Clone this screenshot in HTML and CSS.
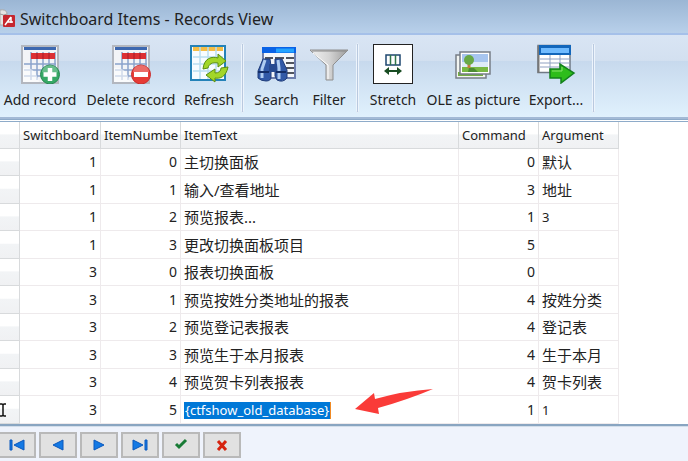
FILE: index.html
```html
<!DOCTYPE html>
<html lang="zh-CN">
<head>
  <meta charset="UTF-8" />
  <title>Switchboard Items - Records View</title>
  <link rel="stylesheet" href="styles.css">
</head>
<body>

<header class="titlebar">
  <svg class="app-icon" width="16" height="22" viewBox="0 0 16 22">
    <path d="M0 2Q6 1 7 5V17H0Z" fill="#e4e4e4" stroke="#aaa"/>
    <path d="M0 6q4 2 7 0" fill="none" stroke="#999"/>
    <rect x="3" y="7" width="12" height="12" rx="1" fill="#c6262e"/>
    <path d="M5 17 11 9M11 9v6M7 14h6" fill="none" stroke="#fff" stroke-width="1.5"/>
  </svg>
  <h1>Switchboard Items - Records View</h1>
</header>

<div class="toolbar">
  <button class="tool">
    <svg width="40" height="40" viewBox="0 0 40 40">
      <rect x="2" y="2" width="36" height="37" fill="#f3f4f7" stroke="#b3b7bf" stroke-width="2"/>
      <path d="M4 4.500H36" stroke="#3d68b0" stroke-width="3"/>
      <path d="M11 8V36M17 8V36M23 8V36M29 8V36M35 8V36M4 20H36M4 26H36M4 32H36" stroke="#8ba2cc" stroke-width="1.500"/>
      <rect x="11" y="9" width="24" height="6" fill="#dc2f34"/>
      <path d="M17 9v6M23 9v6M29 9v6" stroke="#a81d29"/>
      <path d="M3 24q12-2 16 14H3z" fill="#fff" opacity=".6"/>
      <circle cx="30" cy="30.500" r="9.500" fill="#36a865" stroke="#278850"/>
      <path d="M22 28a8 7 0 0 1 16 0q-8 4-16 0" fill="#fff" opacity=".25"/>
      <path d="M30 24v13M23.500 30.500h13" stroke="#fff" stroke-width="4.500"/>
    </svg>
    <span>Add record</span>
  </button>
  <button class="tool">
    <svg width="40" height="40" viewBox="0 0 40 40">
      <rect x="2" y="2" width="36" height="37" fill="#f3f4f7" stroke="#b3b7bf" stroke-width="2"/>
      <path d="M4 4.500H36" stroke="#3d68b0" stroke-width="3"/>
      <path d="M11 8V36M17 8V36M23 8V36M29 8V36M35 8V36M4 20H36M4 26H36M4 32H36" stroke="#8ba2cc" stroke-width="1.500"/>
      <rect x="11" y="9" width="24" height="6" fill="#dc2f34"/>
      <path d="M17 9v6M23 9v6M29 9v6" stroke="#a81d29"/>
      <path d="M3 24q12-2 16 14H3z" fill="#fff" opacity=".6"/>
      <circle cx="30" cy="30.500" r="9.500" fill="#e63b35" stroke="#c92b2b"/>
      <path d="M22 28a8 7 0 0 1 16 0q-8 4-16 0" fill="#fff" opacity=".25"/>
      <path d="M23 30.500h14" stroke="#fff" stroke-width="5"/>
    </svg>
    <span>Delete record</span>
  </button>
  <button class="tool">
    <svg width="40" height="40" viewBox="0 0 40 40">
      <rect x="2" y="2" width="34" height="34" fill="#f7fcff" stroke="#2482b8" stroke-width="2"/>
      <rect x="4" y="3" width="30" height="4" fill="#f4bd45"/>
      <path d="M11 3V35M19 3V35M27 3V35M4 13H34M4 20H34M4 27H34" stroke="#b9ddf1" stroke-width="1.500"/>
      <path d="M14 25C15 14 23 12 29 14V10L37 17 29 23V19C23 18 20 20 19 24Z" fill="#a2d629" stroke="#5a8e10"/>
      <path d="M39 23C37 33 31 35 26 34V38L17 31 26 25V29C30 29 32 27 32 24Z" fill="#a2d629" stroke="#5a8e10"/>
    </svg>
    <span>Refresh</span>
  </button>
  <i class="separator"></i>
  <button class="tool">
    <svg width="40" height="40" viewBox="0 0 40 40">
      <rect x="6" y="4" width="32" height="30" fill="#f4f6fa" stroke="#6e7fae" stroke-width="2"/>
      <rect x="5" y="3" width="34" height="6" fill="#0962e6"/>
      <path d="M19 4.500h18v4H19z" fill="#24a3ff"/>
      <path d="M8 14h8M18 14h9M29 14h8M29 19h8M29 24h8M29 29h8" stroke="#50545e" stroke-width="2"/>
      <path d="M6 15h7l1 7v11q0 4-5 4T1 34V27zM18 15h7l5 11v8q-4 5-10 2l-2-4z" fill="#3159a7" stroke="#203c79"/>
      <path d="M12 20h8v8h-8z" fill="#284b91"/>
      <path d="M8 16 5 25v9M21 16l1 8v11" fill="none" stroke="#b0cdf1" stroke-width="3"/>
      <path d="M1 28h11M19 28h10" stroke="#142e68" stroke-width="2"/>
    </svg>
    <span>Search</span>
  </button>
  <button class="tool">
    <svg width="40" height="40" viewBox="0 0 40 40">
      <defs>
        <linearGradient id="metal"><stop stop-color="#f1f1f1"/><stop offset=".5" stop-color="#d5d5d5"/><stop offset="1" stop-color="#9c9c9c"/></linearGradient>
      </defs>
      <path d="M1 6H39L24 21V36H17V21Z" fill="url(#metal)" stroke="#8f8f8f"/>
      <path d="M3 7H37" stroke="#8a8a8a"/>
      <path d="M4 9 19 21V35" fill="none" stroke="#fff"/>
    </svg>
    <span>Filter</span>
  </button>
  <i class="separator"></i>
  <button class="tool">
    <svg width="40" height="40" viewBox="0 0 40 40">
      <rect x=".5" y=".5" width="39" height="39" fill="#fff" stroke="#222"/>
      <rect x="13" y="11" width="14" height="10" fill="#fff" stroke="#1e4770" stroke-width="1.500"/>
      <path d="M17.500 11v10M22.500 11v10" stroke="#30764a" stroke-width="1.500"/>
      <path d="M14 27h12" stroke="#184c22" stroke-width="2"/>
      <path d="M16 23v8l-5-4zM24 23v8l5-4z" fill="#184c22"/>
    </svg>
    <span>Stretch</span>
  </button>
  <button class="tool">
    <svg width="40" height="40" viewBox="0 0 40 40">
      <rect x="2" y="11" width="30" height="23" fill="#f2f5f2" stroke="#777d86" stroke-width="1.500"/>
      <path d="M4 28h25v4H4z" fill="#73ae42"/>
      <rect x="6" y="8" width="30" height="22" fill="#fff" stroke="#777d86" stroke-width="1.500"/>
      <path d="M8 10h26v18H8z" fill="#a7c5ef"/>
      <path d="M8 18h26v6H8z" fill="#deebf8"/>
      <path d="M8 23h26v5H8z" fill="#79b843"/>
      <path d="M15 24h5l4 4H14z" fill="#4c8b32"/>
      <path d="M13.500 18h3v6h-3z" fill="#c37e3d"/>
      <circle cx="15" cy="16" r="5" fill="#68a946"/>
    </svg>
    <span>OLE as picture</span>
  </button>
  <button class="tool">
    <svg width="40" height="40" viewBox="0 0 40 40">
      <rect x="2" y="1.500" width="32" height="27" fill="#fff" stroke="#707985" stroke-width="1.500"/>
      <path d="M2.500 2v27" stroke="#777" stroke-width="2"/>
      <rect x="3" y="1" width="32" height="10" fill="#1266bb"/>
      <rect x="5" y="4" width="28" height="5" fill="#70bbff"/>
      <path d="M14 11v17M24 11v17M4 15h30M4 19h30M4 23h30" stroke="#8fa1c2"/>
      <path d="M14 25H24V20L38 29 25 39V34H14Z" fill="#2ebd1b" stroke="#13801c" stroke-width="1.500"/>
      <path d="M16 27h10v-4" fill="none" stroke="#8be36e"/>
    </svg>
    <span>Export...</span>
  </button>
  <i class="separator"></i>
</div>

<main class="records">
  <table>
    <colgroup>
      <col class="col-mark"><col class="col-board"><col class="col-num"><col class="col-text"><col class="col-num"><col class="col-num">
    </colgroup>
    <thead>
      <tr><th></th><th>Switchboard</th><th>ItemNumbe</th><th>ItemText</th><th>Command</th><th>Argument</th></tr>
    </thead>
    <tbody>
      <tr><th></th><td class="num">1</td><td class="num">0</td><td>主切换面板</td><td class="num">0</td><td>默认</td></tr>
      <tr><th></th><td class="num">1</td><td class="num">1</td><td>输入/查看地址</td><td class="num">3</td><td>地址</td></tr>
      <tr><th></th><td class="num">1</td><td class="num">2</td><td>预览报表...</td><td class="num">1</td><td class="latin">3</td></tr>
      <tr><th></th><td class="num">1</td><td class="num">3</td><td>更改切换面板项目</td><td class="num">5</td><td></td></tr>
      <tr><th></th><td class="num">3</td><td class="num">0</td><td>报表切换面板</td><td class="num">0</td><td></td></tr>
      <tr><th></th><td class="num">3</td><td class="num">1</td><td>预览按姓分类地址的报表</td><td class="num">4</td><td>按姓分类</td></tr>
      <tr><th></th><td class="num">3</td><td class="num">2</td><td>预览登记表报表</td><td class="num">4</td><td>登记表</td></tr>
      <tr><th></th><td class="num">3</td><td class="num">3</td><td>预览生于本月报表</td><td class="num">4</td><td>生于本月</td></tr>
      <tr><th></th><td class="num">3</td><td class="num">4</td><td>预览贺卡列表报表</td><td class="num">4</td><td>贺卡列表</td></tr>
      <tr>
        <th><svg class="edit-mark" width="8" height="14" viewBox="0 0 8 14"><path d="M0 1H2L3 2 4 1H6M3 2V12M0 13H2L3 12 4 13H6" fill="none" stroke="#111" stroke-width="1.500"/></svg></th>
        <td class="num">3</td><td class="num">5</td><td class="latin"><mark>{ctfshow_old_database}</mark></td><td class="num">1</td><td class="latin">1</td>
      </tr>
    </tbody>
  </table>
  <svg class="arrow" width="80" height="28" viewBox="0 0 80 28">
    <path d="M1 21 20 5 21 11Q49 3 79 1 53 12 24 20L25 26Z" fill="#fa3b38"/>
  </svg>
</main>

<footer class="navigator">
  <button aria-label="First"><svg width="16" height="14" viewBox="0 0 16 14"><path d="M1 2h2v10H1zM15 2v10L5 7z" fill="#1479e4" stroke="#0a58bd"/></svg></button>
  <button aria-label="Previous"><svg width="16" height="14" viewBox="0 0 16 14"><path d="M13 2v10L3 7z" fill="#1479e4" stroke="#0a58bd"/></svg></button>
  <button aria-label="Next"><svg width="16" height="14" viewBox="0 0 16 14"><path d="M3 2v10l10-5z" fill="#1479e4" stroke="#0a58bd"/></svg></button>
  <button aria-label="Last"><svg width="16" height="14" viewBox="0 0 16 14"><path d="M13 2h2v10h-2zM1 2v10l10-5z" fill="#1479e4" stroke="#0a58bd"/></svg></button>
  <button aria-label="Save"><svg width="16" height="14" viewBox="0 0 16 14"><path d="M3 6l3 3 7-7" fill="none" stroke="#187b35" stroke-width="3"/></svg></button>
  <button aria-label="Cancel"><svg width="16" height="14" viewBox="0 0 16 14"><path d="M4 3l8 9M12 3l-8 9" stroke="#d6230f" stroke-width="3"/></svg></button>
</footer>

</body>
</html>
```
FILE: styles.css
```css
* {
  box-sizing: border-box;
}
body {
  margin: 0;
  min-height: 100vh;
  display: flex;
  flex-direction: column;
  font-family: 'Noto Sans', 'Noto Sans CJK SC', sans-serif;
  background: #eff3fc;
  color: #222;
  overflow: hidden;
}
button {
  font: inherit;
  color: inherit;
  padding: 0;
  cursor: pointer;
}
svg {
  display: block;
}
.titlebar {
  display: flex;
  align-items: center;
  gap: 4px;
  height: 35px;
  padding-top: 5px;
  background: linear-gradient(#9bb6d4, #b8d0ea);
  border-bottom: 2px solid #a5c0e9;
}
.titlebar h1 {
  margin: 0;
  font-size: 16px;
  line-height: 20px;
  font-weight: normal;
}
.toolbar {
  display: grid;
  grid-template-columns: 80px 102px 54px 12px 57px 48px 8px 64px 97px 68px 6px;
  height: 84px;
  background: linear-gradient(#d9e5f4 0%, #d3e0f0 31%, #c7d9ed 32%, #e0f1fd 100%);
  border-bottom: 2px solid #a3bad6;
}
.tool {
  display: flex;
  flex-direction: column;
  align-items: center;
  gap: 6px;
  padding-top: 9px;
  border: none;
  background: none;
  font-size: 14px;
  line-height: 20px;
  white-space: nowrap;
}
.separator {
  width: 3px;
  margin: 8px auto 4px;
  border: 1px solid #edf4fc;
  border-radius: 2px;
  background: #b9c9df;
}
.records {
  position: relative;
  background: #fff;
  border-top: 3px double #8eabc9;
  border-bottom: 2px solid #89a5c1;
}
table {
  table-layout: fixed;
  width: 619px;
  border-collapse: separate;
  border-spacing: 0;
}
.col-mark {
  width: 20px;
}
.col-board {
  width: 81px;
}
.col-num {
  width: 80px;
}
.col-text {
  width: 278px;
}
th, td {
  height: 27px;
  padding: 0 3px;
  border-right: 1px solid #eeeaec;
  border-bottom: 1px solid #eeeaec;
  font-size: 15px;
  line-height: 20px;
  font-weight: normal;
  text-align: left;
  white-space: nowrap;
}
tbody tr:nth-child(even) > * {
  height: 28px;
}
th {
  font-size: 13px;
  background: linear-gradient(#fff 45%, #f2f4f6 50%, #f0f1f3);
  border-color: #d8dadc;
}
tbody th {
  padding: 0;
}
.latin {
  font-size: 13px;
}
.num {
  font-size: 14px;
  text-align: right;
}
mark {
  display: inline-block;
  height: 17px;
  padding: 0 1px;
  line-height: 17px;
  color: #fff;
  background: #0078d7;
  border-right: 1px solid #f08a24;
}
.arrow {
  position: absolute;
  left: 354px;
  bottom: 8px;
}
.navigator {
  display: flex;
  gap: 3px;
  padding: 5px 0;
  margin-left: -2px;
  border-top: 1px solid #d3deea;
}
.navigator button {
  display: flex;
  align-items: center;
  justify-content: center;
  width: 38px;
  height: 26px;
  border: 2px solid #b9b9b9;
  background: #e1e1e1;
}
```
